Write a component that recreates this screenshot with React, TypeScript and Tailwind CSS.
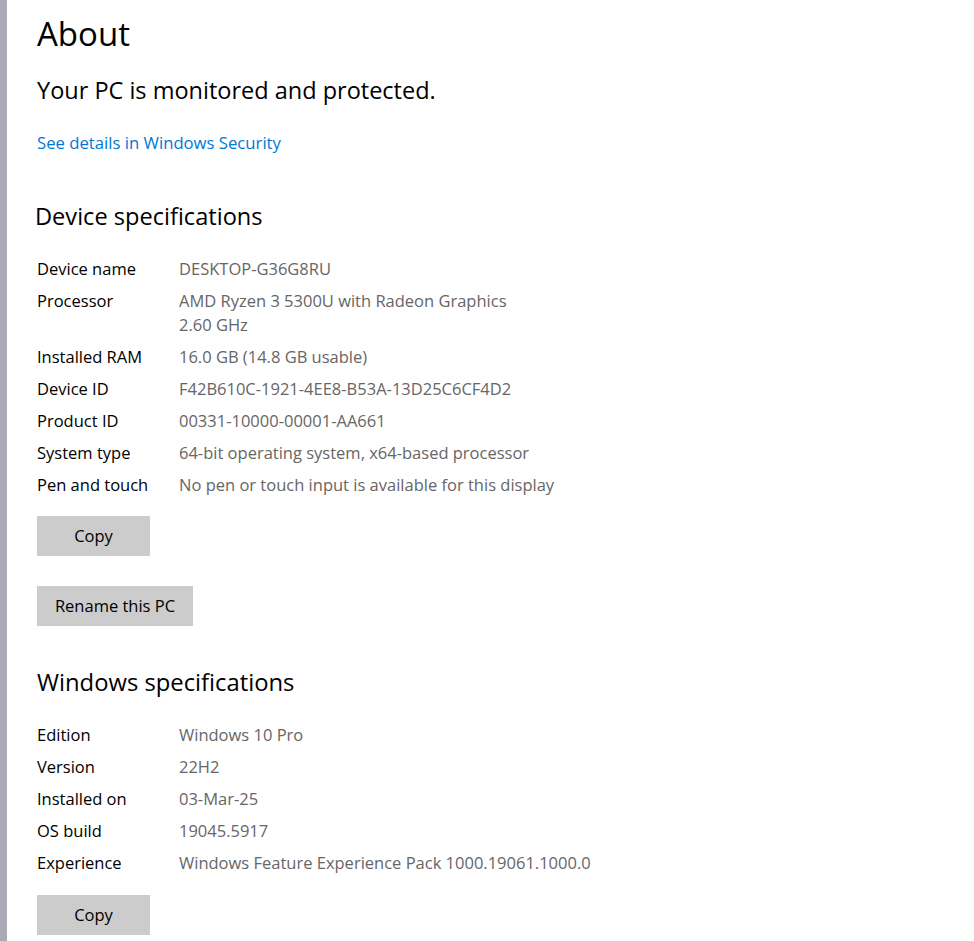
const font = { fontFamily: '"Open Sans", "Noto Sans", sans-serif' };

const device: [string, string[]][] = [
  ["Device name", ["DESKTOP-G36G8RU"]],
  ["Processor", ["AMD Ryzen 3 5300U with Radeon Graphics", "2.60 GHz"]],
  ["Installed RAM", ["16.0 GB (14.8 GB usable)"]],
  ["Device ID", ["F42B610C-1921-4EE8-B53A-13D25C6CF4D2"]],
  ["Product ID", ["00331-10000-00001-AA661"]],
  ["System type", ["64-bit operating system, x64-based processor"]],
  ["Pen and touch", ["No pen or touch input is available for this display"]],
];

const windows: [string, string[]][] = [
  ["Edition", ["Windows 10 Pro"]],
  ["Version", ["22H2"]],
  ["Installed on", ["03-Mar-25"]],
  ["OS build", ["19045.5917"]],
  ["Experience", ["Windows Feature Experience Pack 1000.19061.1000.0"]],
];

function SpecRows({ rows }: { rows: [string, string[]][] }) {
  return (
    <div className="flex flex-col gap-[8px]">
      {rows.map(([label, values]) => (
        <div key={label} className="flex text-[16.5px] leading-[24px]">
          <div className="w-[142px] shrink-0 text-[#000000]">{label}</div>
          <div className="text-[#666666]">
            {values.map((v) => (
              <div key={v}>{v}</div>
            ))}
          </div>
        </div>
      ))}
    </div>
  );
}

function Btn({ children, w }: { children: React.ReactNode; w: string }) {
  return (
    <button className={`${w} h-[40px] bg-[#cccccc] text-[16.5px] text-black flex items-center justify-center`}>
      {children}
    </button>
  );
}

export default function App() {
  return (
    <div className="flex min-h-[941px] w-[974px] bg-white" style={font}>
      {/* left edge of the window */}
      <div className="w-[7px] shrink-0 bg-[#aaa9b5]" />

      <div className="flex flex-col pl-[30px]">
        <h1 className="mt-[11px] text-[33px] leading-[46px] font-normal text-black">About</h1>
        <p className="mt-[17px] text-[23.5px] leading-[32px] text-black">Your PC is monitored and protected.</p>
        <a className="mt-[25px] text-[16.7px] leading-[24px] text-[#0078d4]">See details in Windows Security</a>

        <h2 className="mt-[45px] -ml-[2px] text-[23.6px] leading-[32px] text-black">Device specifications</h2>
        <div className="mt-[25px]">
          <SpecRows rows={device} />
        </div>

        <div className="mt-[19px]">
          <Btn w="w-[113px]">Copy</Btn>
        </div>
        <div className="mt-[30px]">
          <Btn w="w-[156px]">Rename this PC</Btn>
        </div>

        <h2 className="mt-[40px] text-[23.8px] leading-[32px] text-black">Windows specifications</h2>
        <div className="mt-[25px]">
          <SpecRows rows={windows} />
        </div>
        <div className="mt-[20px]">
          <Btn w="w-[113px]">Copy</Btn>
        </div>
      </div>
    </div>
  );
}
